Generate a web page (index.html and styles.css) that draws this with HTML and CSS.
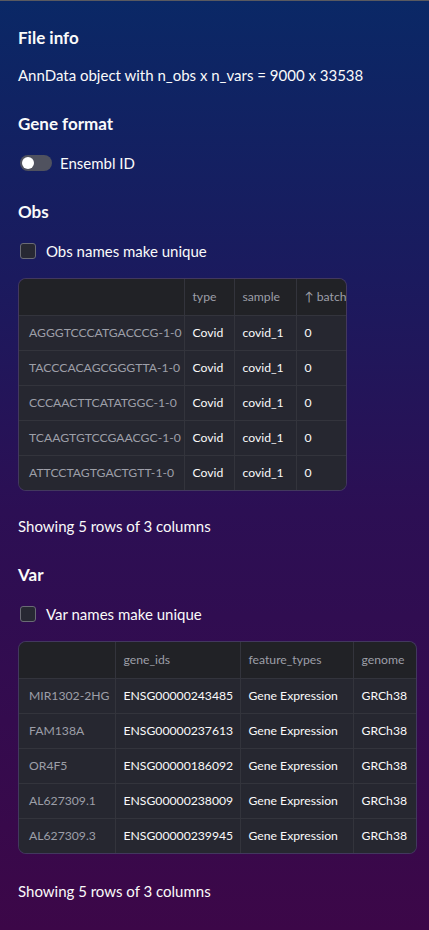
FILE: index.html
```html
<!DOCTYPE html>
<html>
<head>
<meta charset="utf-8">
<link rel="stylesheet" href="styles.css">
</head>
<body>
<div class="topline"></div>
<main class="page">
  <h3 class="h">File info</h3>
  <p class="txt info">AnnData object with n_obs x n_vars = 9000 x 33538</p>

  <h3 class="h gene">Gene format</h3>
  <label class="toggle-row"><span class="track"><span class="knob"></span></span><span class="txt">Ensembl ID</span></label>

  <h3 class="h obs">Obs</h3>
  <label class="check-row"><span class="box"></span><span class="txt">Obs names make unique</span></label>

  <div class="tablewrap t1">
    <table class="grid">
      <colgroup><col class="c1a"><col class="c1b"><col class="c1c"><col class="c1d"></colgroup>
      <thead><tr><th></th><th>type</th><th>sample</th><th>↑ batch</th></tr></thead>
      <tbody>
        <tr><td class="idx">AGGGTCCCATGACCCG-1-0</td><td>Covid</td><td>covid_1</td><td>0</td></tr>
        <tr><td class="idx">TACCCACAGCGGGTTA-1-0</td><td>Covid</td><td>covid_1</td><td>0</td></tr>
        <tr><td class="idx">CCCAACTTCATATGGC-1-0</td><td>Covid</td><td>covid_1</td><td>0</td></tr>
        <tr><td class="idx">TCAAGTGTCCGAACGC-1-0</td><td>Covid</td><td>covid_1</td><td>0</td></tr>
        <tr><td class="idx">ATTCCTAGTGACTGTT-1-0</td><td>Covid</td><td>covid_1</td><td>0</td></tr>
      </tbody>
    </table>
  </div>
  <p class="txt showing">Showing 5 rows of 3 columns</p>

  <h3 class="h var">Var</h3>
  <label class="check-row"><span class="box"></span><span class="txt">Var names make unique</span></label>

  <div class="tablewrap t2">
    <table class="grid">
      <colgroup><col class="c2a"><col class="c2b"><col class="c2c"><col class="c2d"></colgroup>
      <thead><tr><th></th><th>gene_ids</th><th>feature_types</th><th>genome</th></tr></thead>
      <tbody>
        <tr><td class="idx">MIR1302-2HG</td><td>ENSG00000243485</td><td>Gene Expression</td><td>GRCh38</td></tr>
        <tr><td class="idx">FAM138A</td><td>ENSG00000237613</td><td>Gene Expression</td><td>GRCh38</td></tr>
        <tr><td class="idx">OR4F5</td><td>ENSG00000186092</td><td>Gene Expression</td><td>GRCh38</td></tr>
        <tr><td class="idx">AL627309.1</td><td>ENSG00000238009</td><td>Gene Expression</td><td>GRCh38</td></tr>
        <tr><td class="idx">AL627309.3</td><td>ENSG00000239945</td><td>Gene Expression</td><td>GRCh38</td></tr>
      </tbody>
    </table>
  </div>
  <p class="txt showing last">Showing 5 rows of 3 columns</p>
</main>
</body>
</html>
```
FILE: styles.css
```css
html, body {
  margin: 0;
  padding: 0;
}
body {
  min-height: 930px;
  background: linear-gradient(180deg, #0a2866 0%, #1b1a5e 30%, #2c0f54 55%, #3c0748 100%);
  font-family: "Lato", "Noto Sans", sans-serif;
  color: #fafafa;
}
.topline {
  height: 1px;
  background: #5a5a60;
}
.page {
  padding: 0 18px;
  display: flex;
  flex-direction: column;
}
.h {
  margin: 0;
  font-size: 17px;
  font-weight: 700;
  line-height: 24px;
  color: #fafafa;
}
.h:first-child { margin-top: 25px; }
.txt {
  font-size: 15px;
  line-height: 22px;
}
p.txt { margin: 0; }
.info { margin-top: 14px !important; }
.gene { margin-top: 26px; }
.toggle-row {
  display: flex;
  align-items: center;
  gap: 8px;
  margin-top: 16px;
  height: 22px;
}
.track {
  width: 32px;
  height: 16px;
  border-radius: 8px;
  background: #50525f;
  margin-left: 2px;
  display: flex;
  align-items: center;
  padding: 0 2px;
  box-sizing: border-box;
}
.knob {
  width: 12px;
  height: 12px;
  border-radius: 50%;
  background: #ffffff;
}
.obs { margin-top: 26px; }
.var { margin-top: 26px; }
.check-row {
  display: flex;
  align-items: center;
  gap: 10px;
  margin-top: 16px;
  height: 22px;
}
.box {
  width: 16px;
  height: 16px;
  margin-left: 2px;
  box-sizing: border-box;
  border: 1px solid #6a6b75;
  border-radius: 3px;
  background: #272833;
}
.tablewrap {
  margin-top: 16px;
  border: 1px solid rgba(120, 90, 180, 0.35);
  border-radius: 8px;
  overflow: hidden;
  background: #262730;
}
.t1 { width: 327px; }
.t2 { width: 397px; }
.grid {
  border-collapse: collapse;
  table-layout: fixed;
  font-size: 12.2px;
}
.t1 .grid { width: 372px; }
.t2 .grid { width: 397px; }
.c1a { width: 165px; }
.c1b { width: 50px; }
.c1c { width: 62px; }
.c1d { width: 95px; }
.c2a { width: 96px; }
.c2b { width: 125px; }
.c2c { width: 113px; }
.c2d { width: 63px; }
.grid tr { height: 35px; }
.grid thead tr { height: 36px; }
.grid th, .grid td {
  padding: 0 0 0 8px;
  text-align: left;
  white-space: nowrap;
  overflow: hidden;
  border-right: 1px solid #33343c;
  border-bottom: 1px solid #33343c;
}
.grid th {
  background: #212226;
  color: #9d9fa8;
  font-weight: 400;
}
.grid td { color: #fafafa; background: #262730; }
.grid td.idx { color: #9d9fa8; padding-left: 10px; }
.grid tr:last-child td { border-bottom: none; }
.showing { margin-top: 24px !important; }
.showing.last { margin-top: 26px !important; }
```
